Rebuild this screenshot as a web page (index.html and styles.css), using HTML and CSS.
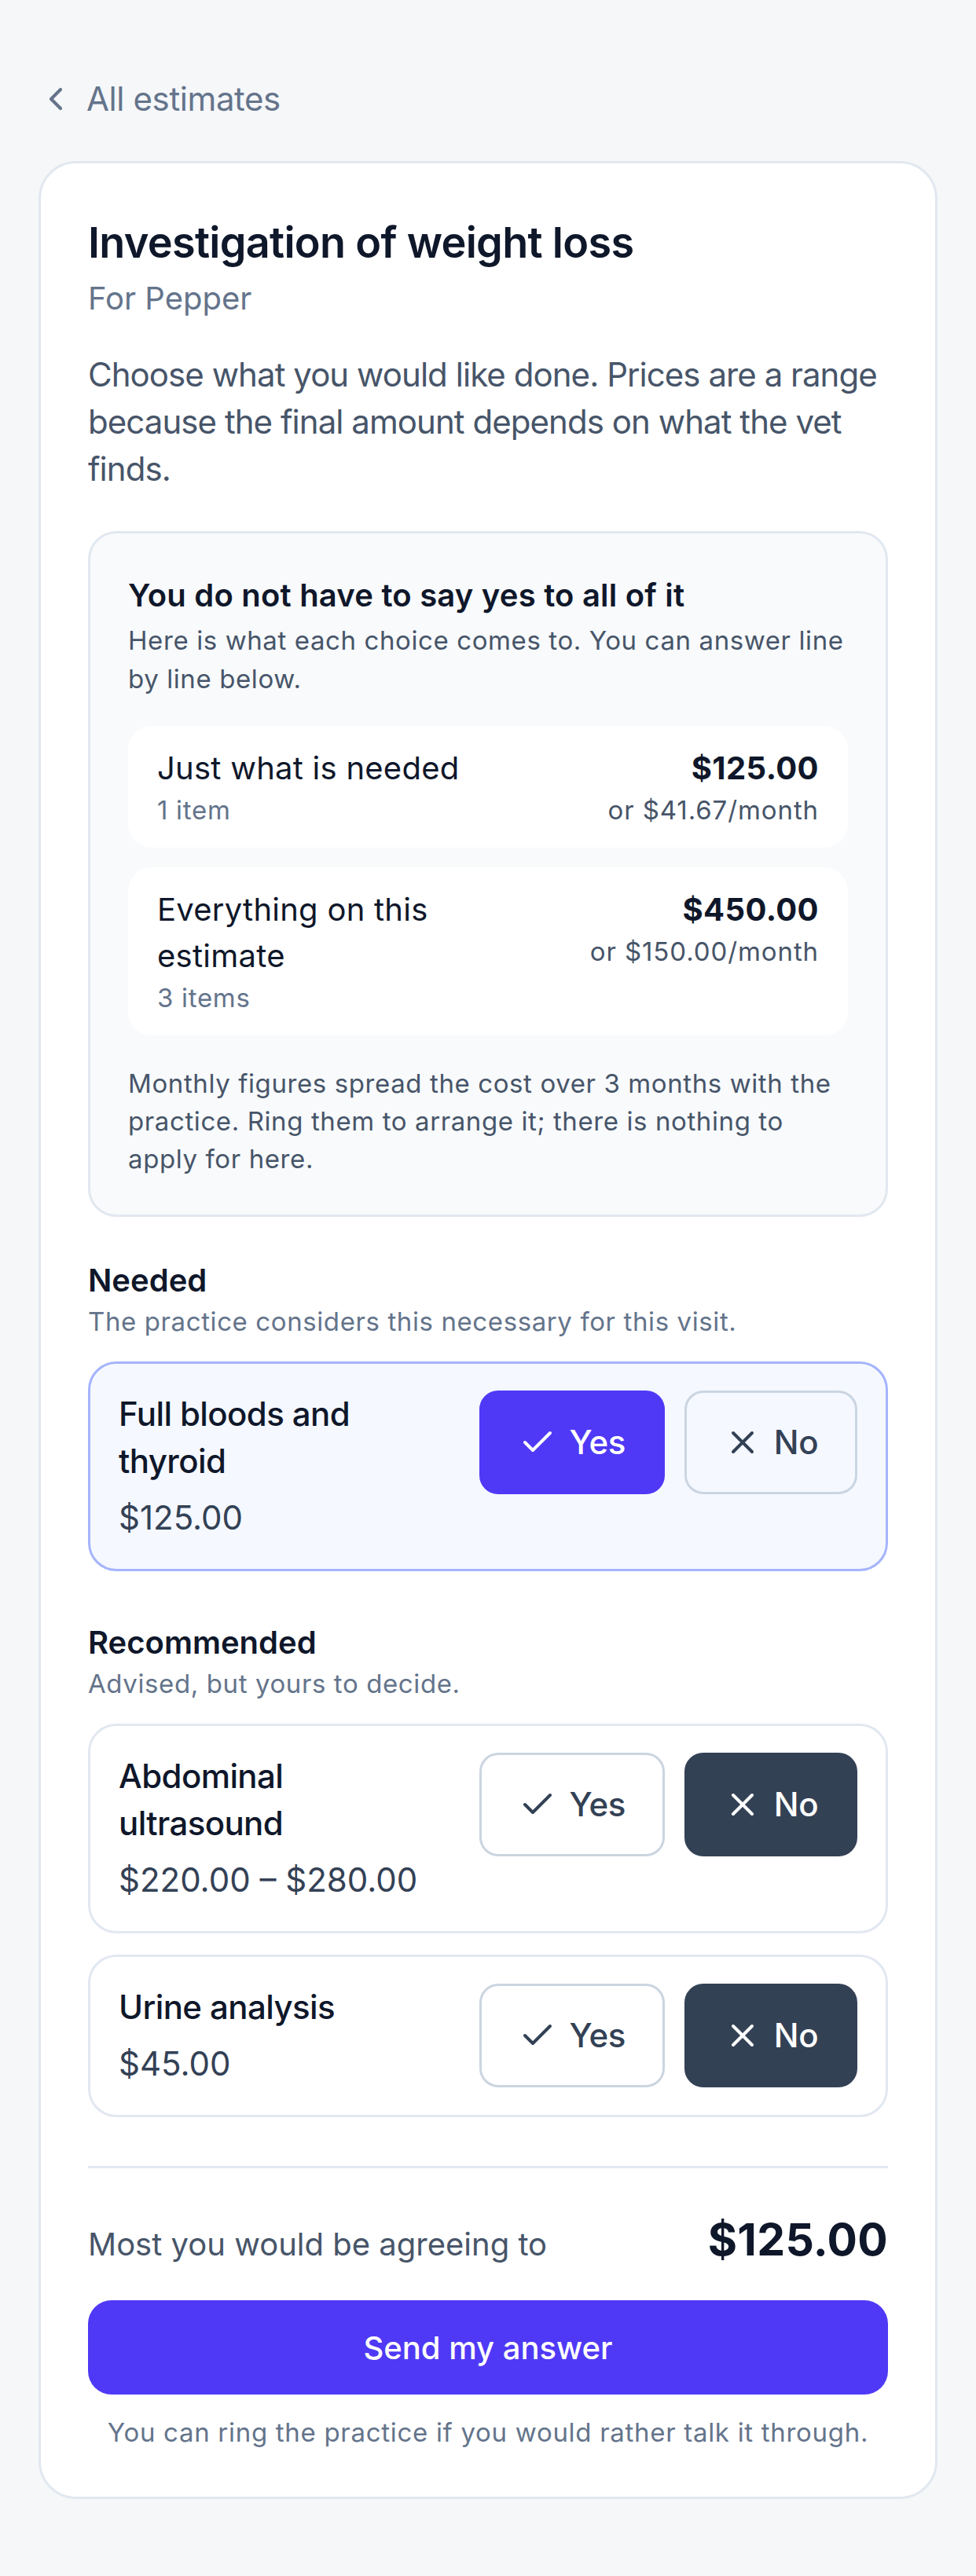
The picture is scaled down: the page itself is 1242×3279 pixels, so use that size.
FILE: index.html
```html
<!DOCTYPE html>
<html lang="en">
<head>
<meta charset="utf-8">
<title>Investigation of weight loss</title>
<link rel="stylesheet" href="styles.css">
</head>
<body>
<main class="page">
  <a class="back" href="#">
    <svg class="back-icon" width="20" height="30" viewBox="0 0 20 30" aria-hidden="true"><polyline points="16,3 4,15 16,27" fill="none" stroke="currentColor" stroke-width="4.2" stroke-linecap="round" stroke-linejoin="round"/></svg>
    <span>All estimates</span>
  </a>

  <section class="card">
    <h1 class="title">Investigation of weight loss</h1>
    <p class="subtitle">For Pepper</p>
    <p class="intro">Choose what you would like done. Prices are a range because the final amount depends on what the vet finds.</p>

    <div class="summary">
      <h2 class="summary-title">You do not have to say yes to all of it</h2>
      <p class="summary-text">Here is what each choice comes to. You can answer line by line below.</p>
      <div class="options">
        <div class="option">
          <div class="option-main">
            <div class="option-label">Just what is needed</div>
            <div class="option-count">1 item</div>
          </div>
          <div class="option-price">
            <div class="price">$125.00</div>
            <div class="monthly">or $41.67/month</div>
          </div>
        </div>
        <div class="option">
          <div class="option-main">
            <div class="option-label">Everything on this estimate</div>
            <div class="option-count">3 items</div>
          </div>
          <div class="option-price">
            <div class="price">$450.00</div>
            <div class="monthly">or $150.00/month</div>
          </div>
        </div>
      </div>
      <p class="summary-note">Monthly figures spread the cost over 3 months with the practice. Ring them to arrange it; there is nothing to apply for here.</p>
    </div>

    <div class="group group-needed">
      <h3 class="group-title">Needed</h3>
      <p class="group-text">The practice considers this necessary for this visit.</p>
      <div class="items">
        <div class="item item-needed">
          <div class="item-info">
            <div class="item-name">Full bloods and thyroid</div>
            <div class="item-price">$125.00</div>
          </div>
          <div class="actions">
            <button class="choice choice-yes is-selected" type="button">
              <svg class="choice-icon" width="48" height="48" viewBox="0 0 24 24" aria-hidden="true"><path d="M20 6 9 17l-5-5" fill="none" stroke="currentColor" stroke-width="2" stroke-linecap="round" stroke-linejoin="round"/></svg>
              <span>Yes</span>
            </button>
            <button class="choice choice-no" type="button">
              <svg class="choice-icon" width="48" height="48" viewBox="0 0 24 24" aria-hidden="true"><path d="M18 6 6 18M6 6l12 12" fill="none" stroke="currentColor" stroke-width="2" stroke-linecap="round" stroke-linejoin="round"/></svg>
              <span>No</span>
            </button>
          </div>
        </div>
      </div>
    </div>

    <div class="group group-recommended">
      <h3 class="group-title">Recommended</h3>
      <p class="group-text">Advised, but yours to decide.</p>
      <div class="items">
        <div class="item">
          <div class="item-info">
            <div class="item-name">Abdominal ultrasound</div>
            <div class="item-price">$220.00 – $280.00</div>
          </div>
          <div class="actions">
            <button class="choice choice-yes" type="button">
              <svg class="choice-icon" width="48" height="48" viewBox="0 0 24 24" aria-hidden="true"><path d="M20 6 9 17l-5-5" fill="none" stroke="currentColor" stroke-width="2" stroke-linecap="round" stroke-linejoin="round"/></svg>
              <span>Yes</span>
            </button>
            <button class="choice choice-no is-declined" type="button">
              <svg class="choice-icon" width="48" height="48" viewBox="0 0 24 24" aria-hidden="true"><path d="M18 6 6 18M6 6l12 12" fill="none" stroke="currentColor" stroke-width="2" stroke-linecap="round" stroke-linejoin="round"/></svg>
              <span>No</span>
            </button>
          </div>
        </div>
        <div class="item">
          <div class="item-info">
            <div class="item-name">Urine analysis</div>
            <div class="item-price">$45.00</div>
          </div>
          <div class="actions">
            <button class="choice choice-yes" type="button">
              <svg class="choice-icon" width="48" height="48" viewBox="0 0 24 24" aria-hidden="true"><path d="M20 6 9 17l-5-5" fill="none" stroke="currentColor" stroke-width="2" stroke-linecap="round" stroke-linejoin="round"/></svg>
              <span>Yes</span>
            </button>
            <button class="choice choice-no is-declined" type="button">
              <svg class="choice-icon" width="48" height="48" viewBox="0 0 24 24" aria-hidden="true"><path d="M18 6 6 18M6 6l12 12" fill="none" stroke="currentColor" stroke-width="2" stroke-linecap="round" stroke-linejoin="round"/></svg>
              <span>No</span>
            </button>
          </div>
        </div>
      </div>
    </div>

    <div class="footer">
      <div class="total">
        <span class="total-label">Most you would be agreeing to</span>
        <strong class="total-value">$125.00</strong>
      </div>
      <button class="send" type="button">Send my answer</button>
      <p class="helper">You can ring the practice if you would rather talk it through.</p>
    </div>
  </section>
</main>
</body>
</html>
```

FILE: styles.css
```css
* {
  box-sizing: border-box;
}

html {
  background: #f6f7f9;
}

body {
  margin: 0;
  background: #f6f7f9;
  font-family: Inter, "Noto Sans", "Liberation Sans", sans-serif;
  color: #0f172a;
}

p, h1, h2, h3 {
  margin: 0;
}

button {
  font-family: inherit;
}

.page {
  padding: 96px 49px 98px;
}

/* back link */
.back {
  display: flex;
  align-items: center;
  gap: 29px;
  height: 60px;
  margin: 0 0 49px 12px;
  color: #64748b;
  font-size: 42px;
  line-height: 60px;
  letter-spacing: -0.4px;
  text-decoration: none;
}

.back-icon {
  flex: none;
  display: block;
}

/* main card */
.card {
  background: #ffffff;
  border: 3px solid #e2e8f0;
  border-radius: 48px;
  padding: 60px 60px 58px;
}

.title {
  font-size: 54px;
  line-height: 81px;
  font-weight: 600;
  color: #0f172a;
  letter-spacing: -0.7px;
}

.subtitle {
  margin-top: 3px;
  font-size: 40px;
  line-height: 56px;
  color: #64748b;
}

.intro {
  margin-top: 39px;
  font-size: 42px;
  line-height: 60px;
  letter-spacing: -0.95px;
  color: #475569;
}

/* summary box */
.summary {
  margin-top: 49px;
  background: #f8fafc;
  border: 3px solid #e2e8f0;
  border-radius: 36px;
  padding: 50px 48px 47px;
}

.summary-title {
  font-size: 40px;
  line-height: 58px;
  font-weight: 600;
  letter-spacing: 0.2px;
  color: #0f172a;
}

.summary-text {
  margin-top: 4px;
  font-size: 33px;
  line-height: 49px;
  letter-spacing: 0.6px;
  color: #475569;
}

.options {
  margin-top: 35px;
  display: flex;
  flex-direction: column;
  gap: 25px;
}

.option {
  display: flex;
  align-items: flex-start;
  gap: 56px;
  background: #ffffff;
  border-radius: 30px;
  padding: 24px 37px;
}

.option-main {
  flex: 1;
  min-width: 0;
}

.option-label {
  font-size: 40px;
  line-height: 59px;
  letter-spacing: 0.25px;
  color: #0f172a;
}

.option-count {
  font-size: 33px;
  line-height: 48px;
  letter-spacing: 0.7px;
  color: #64748b;
}

.option-price {
  flex: none;
  text-align: right;
}

.price {
  font-size: 40px;
  line-height: 59px;
  font-weight: 700;
  letter-spacing: 0.4px;
  color: #0f172a;
}

.monthly {
  font-size: 33px;
  line-height: 48px;
  letter-spacing: 0.9px;
  color: #475569;
}

.summary-note {
  margin-top: 37px;
  font-size: 33px;
  line-height: 48px;
  letter-spacing: 0.6px;
  color: #475569;
}

/* groups */
.group-needed {
  margin-top: 53px;
}

.group-recommended {
  margin-top: 63px;
}

.group-title {
  font-size: 40px;
  line-height: 56px;
  font-weight: 600;
  color: #0f172a;
}

.group-text {
  font-size: 33px;
  line-height: 48px;
  letter-spacing: 0.6px;
  color: #64748b;
}

.items {
  margin-top: 27px;
  display: flex;
  flex-direction: column;
  gap: 27px;
}

.item {
  display: flex;
  align-items: flex-start;
  gap: 48px;
  background: #ffffff;
  border: 3px solid #e2e8f0;
  border-radius: 36px;
  padding: 34px 36px 35px;
}

.item-needed {
  background: #f5f8ff;
  border-color: #a5b4fc;
}

.item-info {
  flex: 1;
  min-width: 0;
}

.item-name {
  font-size: 42px;
  line-height: 60px;
  font-weight: 500;
  letter-spacing: -0.6px;
  color: #0f172a;
}

.item-price {
  margin-top: 12px;
  font-size: 42px;
  line-height: 60px;
  color: #334155;
}

.actions {
  flex: none;
  display: flex;
  gap: 25px;
}

.choice {
  display: flex;
  align-items: center;
  justify-content: center;
  gap: 16px;
  height: 132px;
  padding: 0 47px;
  border: 3px solid #cbd5e1;
  border-radius: 24px;
  background: transparent;
  color: #334155;
  font-size: 42px;
  line-height: 60px;
  font-weight: 500;
  letter-spacing: -0.5px;
}

.item .choice-yes {
  background: #ffffff;
}

.item-needed .choice-no {
  background: transparent;
}

.choice.is-selected {
  background: #4f39f6;
  border-color: #4f39f6;
  color: #ffffff;
}

.choice.is-declined {
  background: #334155;
  border-color: #334155;
  color: #ffffff;
}

.choice-icon {
  display: block;
  flex: none;
}

/* footer */
.footer {
  margin-top: 62px;
  border-top: 3px solid #e2e8f0;
  padding-top: 56px;
}

.total {
  display: flex;
  align-items: baseline;
  justify-content: space-between;
}

.total-label {
  font-size: 40px;
  line-height: 56px;
  color: #475569;
}

.total-value {
  font-size: 57px;
  line-height: 70px;
  font-weight: 700;
  letter-spacing: 0.3px;
  color: #0f172a;
}

.send {
  display: block;
  width: 100%;
  height: 120px;
  margin-top: 42px;
  border: none;
  border-radius: 30px;
  background: #4f39f6;
  color: #ffffff;
  font-size: 40px;
  font-weight: 500;
}

.helper {
  margin-top: 24px;
  font-size: 33px;
  line-height: 48px;
  letter-spacing: 0.7px;
  color: #64748b;
  text-align: center;
}
```
